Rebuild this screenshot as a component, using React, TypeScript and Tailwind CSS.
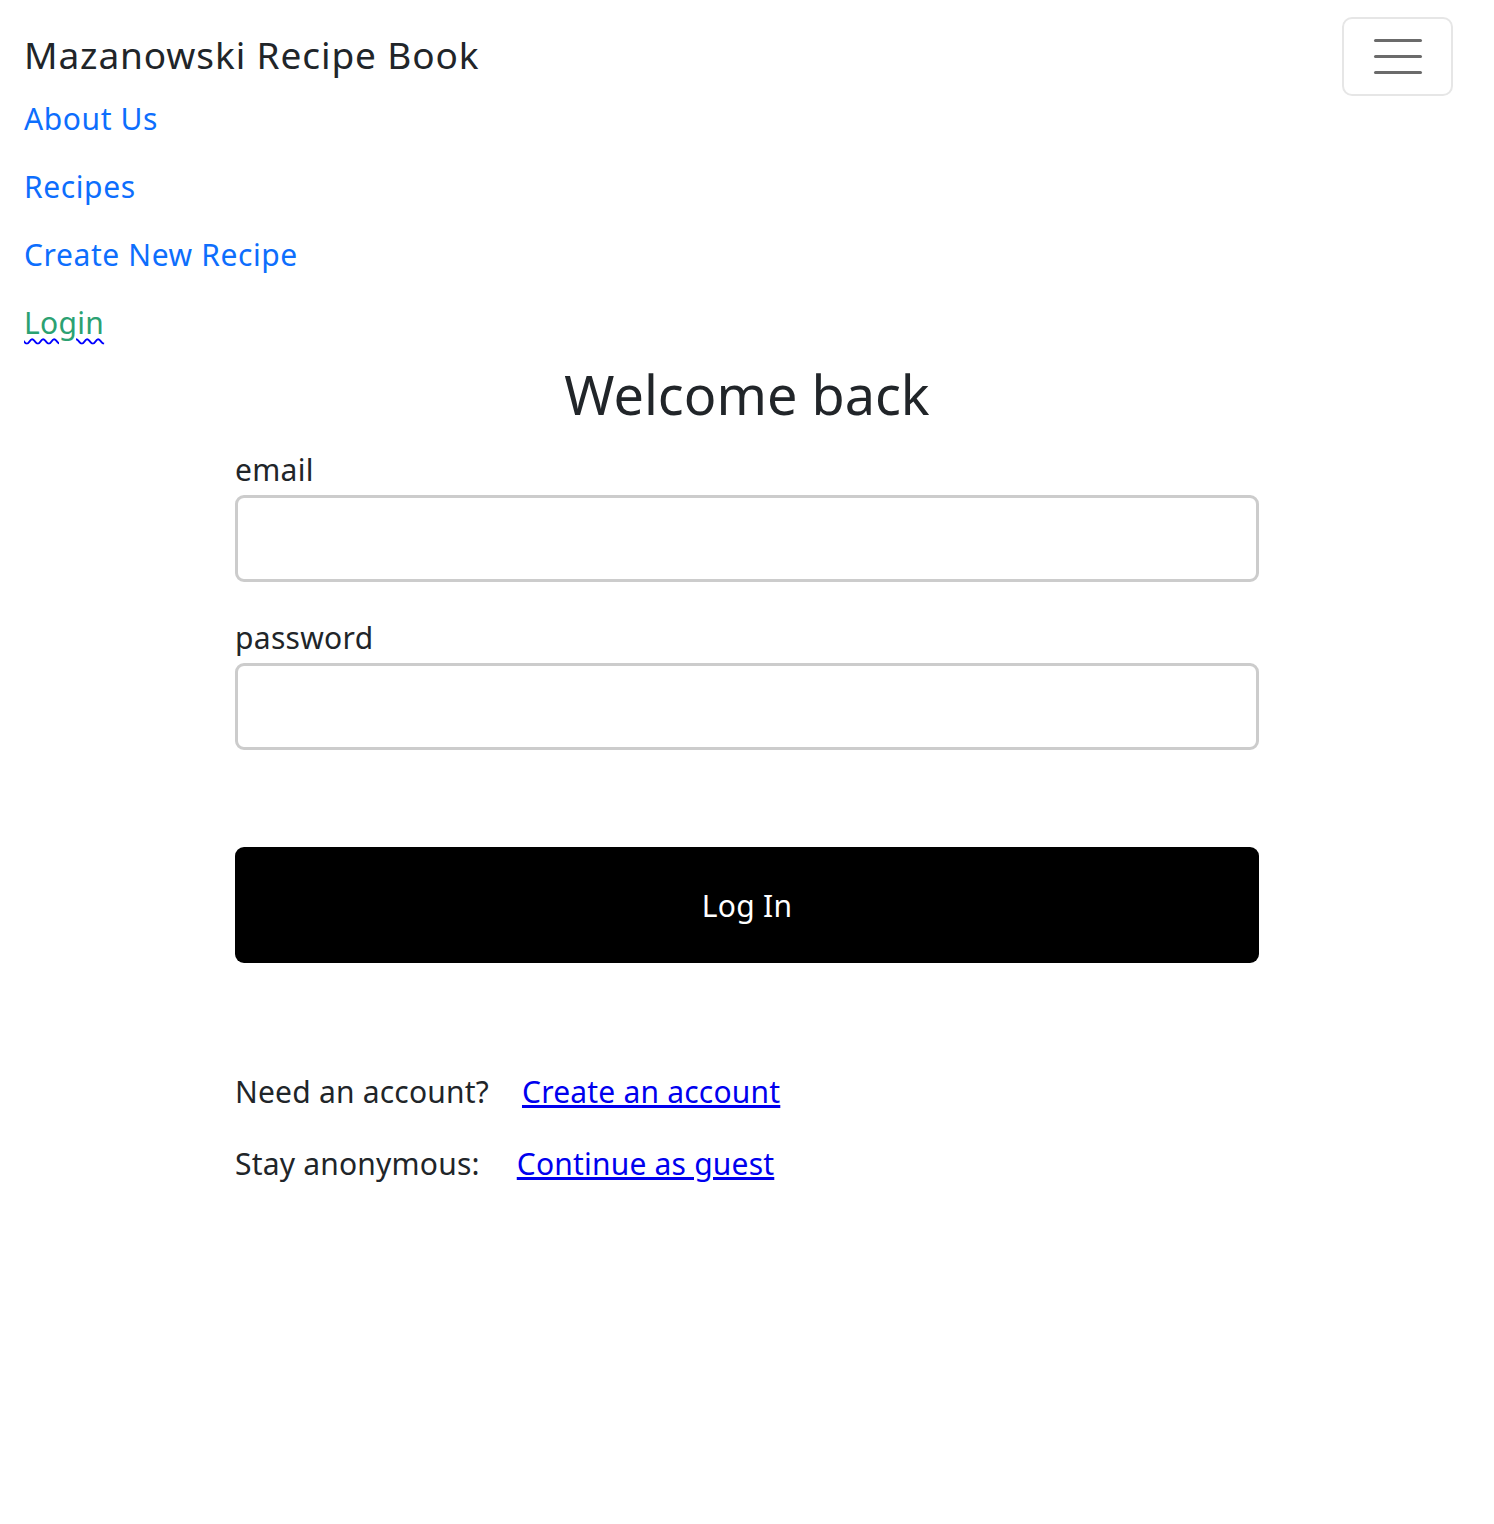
import React from "react";

export default function App() {
  return (
    <div className="min-h-[1524px] bg-white text-[#212529]" style={{ fontFamily: "'Noto Sans', sans-serif" }}>
      <nav className="flex items-start justify-between pl-[24px] pt-[17px]">
        <div className="flex flex-col">
          <div className="flex h-[78px] items-center -mt-[2px] text-[37px] leading-none tracking-[0.9px] text-[#212529]">Mazanowski Recipe Book</div>
          <div className="flex flex-col">
            <a href="#" className="flex h-[68px] items-center -mt-[9px] text-[30px] tracking-[0.6px] text-[#0d6efd]">About Us</a>
            <a href="#" className="flex h-[68px] items-center text-[30px] tracking-[0.6px] text-[#0d6efd]">Recipes</a>
            <a href="#" className="flex h-[68px] items-center text-[30px] tracking-[0.6px] text-[#0d6efd]">Create New Recipe</a>
            <a href="#" className="flex h-[68px] items-center text-[30px] tracking-[0.3px] text-[#2ba172]">
              <span className="underline decoration-wavy decoration-[#0000ff] decoration-2 underline-offset-4">Login</span>
            </a>
          </div>
        </div>
        <button className="mr-[41px] flex h-[79px] w-[111px] flex-col items-center justify-center gap-[13px] rounded-[10px] border-2 border-[#e6e6e6] bg-white">
          <span className="block h-[3px] w-[48px] rounded-full bg-[#6b6b6b]" />
          <span className="block h-[3px] w-[48px] rounded-full bg-[#6b6b6b]" />
          <span className="block h-[3px] w-[48px] rounded-full bg-[#6b6b6b]" />
        </button>
      </nav>
      <main className="mx-auto w-[1024px]">
        <h1 className="mt-[2px] text-center text-[54px] leading-[72px]">Welcome back</h1>
        <div className="mt-[22px] text-[30px] leading-[36px] tracking-[0.3px]">email</div>
        <div className="mt-[7px] h-[87px] w-full rounded-[9px] border-[3px] border-[#cccccc]" />
        <div className="mt-[38px] text-[30px] leading-[36px] tracking-[0.3px]">password</div>
        <div className="mt-[7px] h-[87px] w-full rounded-[9px] border-[3px] border-[#cccccc]" />
        <button className="mt-[97px] flex h-[116px] w-full items-center justify-center rounded-[9px] bg-black text-[30px] tracking-[0.3px] text-white">Log In</button>
        <div className="mt-[111px] flex flex-col gap-[36px] text-[30px] leading-[36px] tracking-[0.2px]">
          <div>
            Need an account?<a href="#" className="ml-[33px] text-[#0000ee] underline">Create an account</a>
          </div>
          <div>
            Stay anonymous:<a href="#" className="ml-[37px] text-[#0000ee] underline">Continue as guest</a>
          </div>
        </div>
      </main>
    </div>
  );
}
